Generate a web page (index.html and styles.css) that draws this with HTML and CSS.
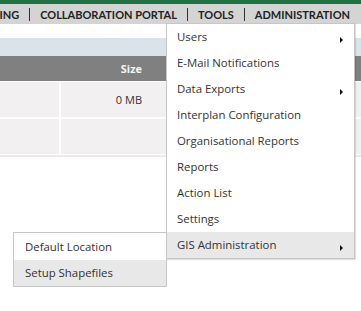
FILE: index.html
```html
<!DOCTYPE html>
<html lang="en">
<head>
    <meta charset="UTF-8">
    <meta name="viewport" content="width=device-width, initial-scale=1.0">
    <title>Administration</title>
    <link rel="stylesheet" href="styles.css">
</head>
<body>

    <div class="topbar"></div>

    <nav class="nav">
        <span class="nav-item">REPORTING</span>
        <span class="nav-item">COLLABORATION PORTAL</span>
        <span class="nav-item">TOOLS</span>
        <span class="nav-item last">ADMINISTRATION</span>
    </nav>

    <div class="strip"></div>
    <div class="toolbar"></div>

    <div class="table-head">
        <div class="col-a"></div>
        <div class="col-b">Size</div>
    </div>
    <div class="table-row">
        <div class="cell col-a"></div>
        <div class="cell col-b">0 MB</div>
        <div class="cell col-c"></div>
    </div>
    <div class="table-row">
        <div class="cell col-a"></div>
        <div class="cell col-b"></div>
        <div class="cell col-c"></div>
    </div>
    <div class="table-end"></div>

    <div class="menu">
        <div class="menu-item sub">Users</div>
        <div class="menu-item">E-Mail Notifications</div>
        <div class="menu-item sub">Data Exports</div>
        <div class="menu-item">Interplan Configuration</div>
        <div class="menu-item">Organisational Reports</div>
        <div class="menu-item">Reports</div>
        <div class="menu-item">Action List</div>
        <div class="menu-item">Settings</div>
        <div class="menu-item sub active">GIS Administration</div>

        <div class="submenu">
            <div class="menu-item">Default Location</div>
            <div class="menu-item active">Setup Shapefiles</div>
        </div>
    </div>

</body>
</html>
```

FILE: styles.css
```css
body {
    font-family: "Open Sans", "Noto Sans", sans-serif;
    margin: 0;
    padding: 0;
    background-color: #fff;
    color: #333;
    overflow: hidden;
}
.topbar {
    height: 4px;
    background-color: #217346;
}
.nav {
    display: flex;
    justify-content: flex-end;
    align-items: center;
    height: 20px;
    padding-right: 1px;
    background-color: #d4d4d4;
    overflow: hidden;
    white-space: nowrap;
}
.nav-item {
    font-family: Lato, sans-serif;
    font-weight: bold;
    font-size: 11px;
    color: #222;
    padding: 0 10px;
    line-height: 13px;
    border-right: 1px solid #333;
}
.nav-item.last {
    border-right: none;
}
.strip {
    height: 14px;
}
.toolbar {
    height: 18px;
    background-color: #dbe3ea;
}
.table-head {
    display: flex;
    height: 25px;
    background-color: #808080;
    color: #f4f4f4;
    font-weight: bold;
    font-size: 11px;
    margin-bottom: 1px;
}
.table-row {
    display: flex;
    gap: 2px;
    height: 35px;
    margin-bottom: 2px;
    font-size: 11px;
}
.col-a {
    width: 59px;
}
.table-head .col-a {
    width: 61px;
}
.col-b {
    width: 108px;
    display: flex;
    align-items: center;
    justify-content: flex-end;
    padding-right: 27px;
    box-sizing: border-box;
}
.col-c {
    flex: 1;
}
.cell {
    background-color: #f2f0f0;
}
.table-end {
    height: 2px;
    margin-top: -1px;
    background-color: #ebebeb;
}
.menu {
    position: absolute;
    left: 166px;
    top: 23px;
    width: 187px;
    background-color: #fff;
    border: 1px solid #c6c6c6;
    box-shadow: 1px 1px 1px rgba(0, 0, 0, 0.12);
}
.menu-item {
    height: 26px;
    line-height: 26px;
    padding-left: 10px;
    font-size: 11.4px;
    color: #333;
    position: relative;
}
.menu-item.active {
    background-color: #e8e8e8;
}
.menu-item.sub::after {
    content: "";
    position: absolute;
    right: 11px;
    top: 13px;
    border-left: 3px solid #111;
    border-top: 3px solid transparent;
    border-bottom: 3px solid transparent;
}
.submenu {
    position: absolute;
    left: -154px;
    top: 208px;
    width: 152px;
    padding-top: 1px;
    background-color: #fff;
    border: 1px solid #c6c6c6;
}
.submenu .menu-item {
    padding-left: 11px;
}
```
